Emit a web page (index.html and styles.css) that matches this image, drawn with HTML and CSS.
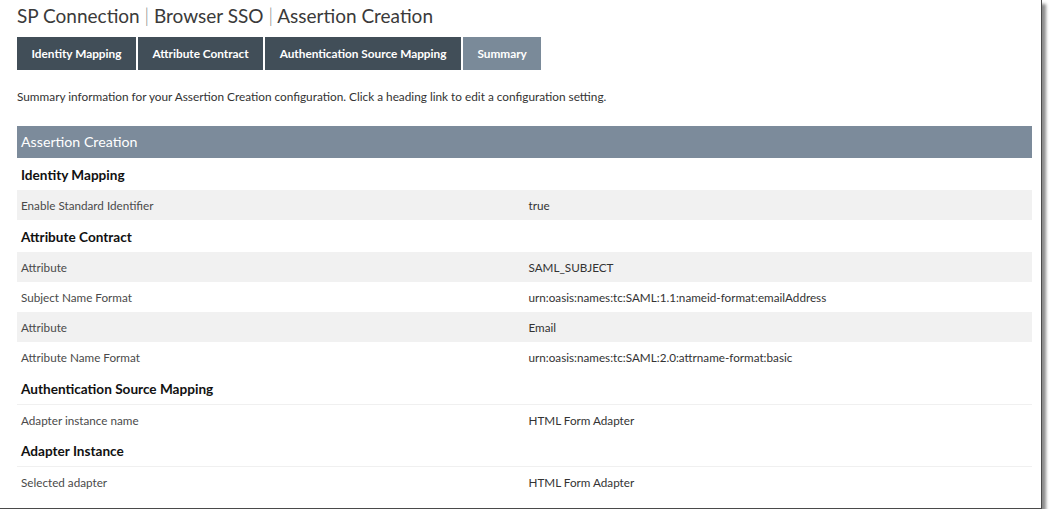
FILE: index.html
```html
<!DOCTYPE html>
<html>
<head>
<meta charset="utf-8">
<link rel="stylesheet" href="styles.css">
</head>
<body>
<div class="frame">
  <h1 class="title">SP Connection <span class="sep">|</span> Browser SSO <span class="sep">|</span> Assertion Creation</h1>
  <div class="tabs">
    <div class="tab">Identity Mapping</div>
    <div class="tab">Attribute Contract</div>
    <div class="tab">Authentication Source Mapping</div>
    <div class="tab active">Summary</div>
  </div>
  <p class="desc">Summary information for your Assertion Creation configuration. Click a heading link to edit a configuration setting.</p>
  <div class="summary">
    <div class="bar">Assertion Creation</div>
    <div class="section">Identity Mapping</div>
    <div class="row shade"><span class="label">Enable Standard Identifier</span><span class="value">true</span></div>
    <div class="section">Attribute Contract</div>
    <div class="row shade"><span class="label">Attribute</span><span class="value">SAML_SUBJECT</span></div>
    <div class="row"><span class="label">Subject Name Format</span><span class="value">urn:oasis:names:tc:SAML:1.1:nameid-format:emailAddress</span></div>
    <div class="row shade"><span class="label">Attribute</span><span class="value">Email</span></div>
    <div class="row"><span class="label">Attribute Name Format</span><span class="value">urn:oasis:names:tc:SAML:2.0:attrname-format:basic</span></div>
    <div class="section">Authentication Source Mapping</div>
    <div class="row lined"><span class="label">Adapter instance name</span><span class="value">HTML Form Adapter</span></div>
    <div class="section">Adapter Instance</div>
    <div class="row lined"><span class="label">Selected adapter</span><span class="value">HTML Form Adapter</span></div>
  </div>
</div>
</body>
</html>
```

FILE: styles.css
```css
* { box-sizing: border-box; }
html, body { margin: 0; padding: 0; background: #fff; }
body { font-family: Lato, "Open Sans", sans-serif; color: #333; }

.frame {
  width: 1042px;
  height: 509px;
  padding: 4px 9px 0 17px;
  border-right: 1px solid #4a4a4a;
  border-bottom: 1px solid #4a4a4a;
  box-shadow: 4px 4px 3px rgba(0, 0, 0, 0.45);
  overflow: hidden;
}

.title {
  margin: 0;
  font-size: 19px;
  line-height: 24px;
  font-weight: 400;
  color: #3a3a3a;
}
.sep { color: #8a8a8a; font-weight: 300; }

.tabs {
  display: flex;
  gap: 2px;
  margin-top: 9px;
}
.tab {
  height: 33px;
  line-height: 33px;
  padding: 0 14.5px;
  background: #414e58;
  color: #fff;
  font-size: 11.8px;
  font-weight: 700;
}
.tab.active { background: #7a8a99; }

.desc {
  margin: 20px 0 0;
  font-size: 11.8px;
  line-height: 14px;
  color: #333;
}

.summary { margin-top: 22px; }

.bar {
  height: 32px;
  line-height: 32px;
  padding-left: 4px;
  background: #7c8b9b;
  color: #fff;
  font-size: 14.2px;
}

.section {
  height: 32px;
  line-height: 34px;
  padding-left: 4px;
  font-size: 13.6px;
  font-weight: 700;
  color: #111;
}

.row {
  display: grid;
  grid-template-columns: 1fr 1fr;
  height: 30px;
  line-height: 30px;
  font-size: 11.7px;
}
.row.shade { background: #f1f1f1; }
.row.lined { border-top: 1px solid #f0f0f0; }
.label { padding-left: 4px; color: #4a4a4a; }
.value { padding-left: 4px; color: #333; }
```
